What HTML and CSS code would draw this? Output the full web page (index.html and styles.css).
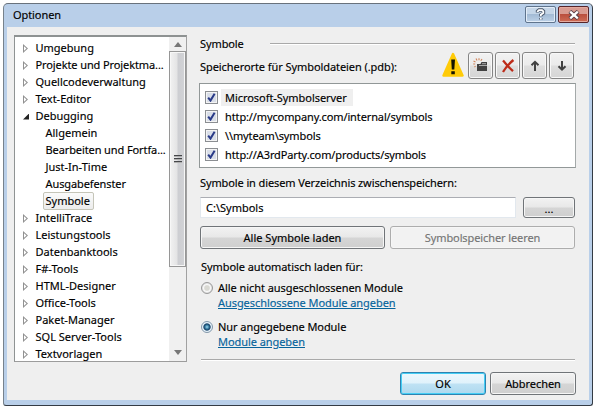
FILE: index.html
```html
<!DOCTYPE html>
<html lang="de">
<head>
<meta charset="utf-8">
<title>Optionen</title>
<link rel="stylesheet" href="styles.css">
</head>
<body>
<div class="window">
  <header class="titlebar">
    <h1>Optionen</h1>
    <div class="caption-buttons">
      <button class="caption help" aria-label="Hilfe"><svg width="11" height="13" viewBox="0 0 11 13"><path d="M2.5 4.5V3.2L4 2h3l1.5 1.3v1.9L5.8 7v1.5M5.8 10v1.5" fill="none" stroke="#4c586b" stroke-width="3.4"/><path d="M2.7 4V3.4L4 2.2h3l1.3 1.2v1.7L5.8 6.8v1.5M5.8 10.1v1.3" fill="none" stroke="#fff" stroke-width="1.8"/></svg></button>
      <button class="caption close" aria-label="Schließen"><svg width="12" height="10" viewBox="0 0 12 10"><path d="M1.8 1.4l8.4 7.2M10.2 1.4L1.8 8.6" stroke="#594048" stroke-width="4.2"/><path d="M2.2 1.7l7.6 6.6M9.8 1.7L2.2 8.3" stroke="#fff" stroke-width="2.3"/></svg></button>
    </div>
  </header>
  <main class="client">
    <nav class="tree">
      <ul class="nodes">
        <li><i class="closed"></i><span>Umgebung</span></li>
        <li><i class="closed"></i><span class="tight">Projekte und Projektma...</span></li>
        <li><i class="closed"></i><span>Quellcodeverwaltung</span></li>
        <li><i class="closed"></i><span>Text-Editor</span></li>
        <li><i class="open"></i><span>Debugging</span></li>
        <li class="child"><span>Allgemein</span></li>
        <li class="child"><span class="tight">Bearbeiten und Fortfa...</span></li>
        <li class="child"><span>Just-In-Time</span></li>
        <li class="child"><span class="tight">Ausgabefenster</span></li>
        <li class="child"><span class="selected">Symbole</span></li>
        <li><i class="closed"></i><span>IntelliTrace</span></li>
        <li><i class="closed"></i><span>Leistungstools</span></li>
        <li><i class="closed"></i><span>Datenbanktools</span></li>
        <li><i class="closed"></i><span>F#-Tools</span></li>
        <li><i class="closed"></i><span>HTML-Designer</span></li>
        <li><i class="closed"></i><span>Office-Tools</span></li>
        <li><i class="closed"></i><span>Paket-Manager</span></li>
        <li><i class="closed"></i><span>SQL Server-Tools</span></li>
        <li><i class="closed"></i><span>Textvorlagen</span></li>
      </ul>
      <div class="scrollbar">
        <svg class="arrow" width="8" height="5"><path d="M0 5L4 0l4 5z"/></svg>
        <div class="thumb"><b></b><b></b><b></b></div>
        <svg class="arrow down" width="8" height="5"><path d="M0 0h8L4 5z"/></svg>
      </div>
    </nav>
    <section class="page">
      <div class="heading"><span>Symbole</span><hr></div>
      <div class="toolbar">
        <span class="caption-text">Speicherorte für Symboldateien (.pdb):</span>
        <svg class="warning" width="22" height="26" viewBox="0 0 22 26"><path d="M11 2L20.5 23.5h-19z" fill="#ffcb08" stroke="#ffcb08" stroke-width="2.4" stroke-linejoin="round"/><path d="M9.2 7.5h3.8l-.7 10H9.8zM9.3 19.3h3.5v3H9.3z" fill="#161400"/></svg>
        <button class="tool"><svg width="16" height="16" viewBox="0 0 16 16"><path d="M4 13V6h3.500l1-2H14v9z" fill="#414141"/><path d="M6 7.500h8M9 5.700h4" stroke="#b5b5b5" stroke-width=".9"/><path d="M.5 3l2 1M3 .5l1 2M6 .2v2M9 1L7.800 2.800M.2 6h2M2.500 8l-1 1.200" stroke="#d18358" stroke-width="1.1"/></svg></button>
        <button class="tool"><svg width="16" height="16" viewBox="0 0 16 16"><path d="M3 2.500c3 3.300 6 7 10 10.700M13.400 2C9 5.700 5.700 9.300 3 14" stroke="#bd2c1a" stroke-width="2.300" fill="none"/></svg></button>
        <button class="tool"><svg width="16" height="16" viewBox="0 0 16 16"><path d="M8 13V4M4.500 7.300L8 3.800l3.500 3.500" stroke="#414141" stroke-width="2" fill="none"/></svg></button>
        <button class="tool"><svg width="16" height="16" viewBox="0 0 16 16"><path d="M8 3v9M4.500 8.200L8 11.700l3.500-3.500" stroke="#414141" stroke-width="2" fill="none"/></svg></button>
      </div>
      <ul class="locations">
        <li><i class="check"><svg width="9" height="9" viewBox="0 0 9 9"><path d="M1.2 4.6l2.3 3L7.6.8" fill="none" stroke="#293a87" stroke-width="2"/></svg></i><span class="current">Microsoft-Symbolserver</span></li>
        <li><i class="check"><svg width="9" height="9" viewBox="0 0 9 9"><path d="M1.2 4.6l2.3 3L7.6.8" fill="none" stroke="#293a87" stroke-width="2"/></svg></i><span class="url">http://mycompany.com/internal/symbols</span></li>
        <li><i class="check"><svg width="9" height="9" viewBox="0 0 9 9"><path d="M1.2 4.6l2.3 3L7.6.8" fill="none" stroke="#293a87" stroke-width="2"/></svg></i><span class="url">\\myteam\symbols</span></li>
        <li><i class="check"><svg width="9" height="9" viewBox="0 0 9 9"><path d="M1.2 4.6l2.3 3L7.6.8" fill="none" stroke="#293a87" stroke-width="2"/></svg></i><span class="url">http://A3rdParty.com/products/symbols</span></li>
      </ul>
      <div class="cache-label">Symbole in diesem Verzeichnis zwischenspeichern:</div>
      <div class="cache-row"><div class="field">C:\Symbols</div><button class="push browse">...</button></div>
      <div class="actions"><button class="push">Alle Symbole laden</button><button class="push disabled">Symbolspeicher leeren</button></div>
      <div class="auto-label">Symbole automatisch laden für:</div>
      <div class="option"><i class="radio"></i><div><p>Alle nicht ausgeschlossenen Module</p><a>Ausgeschlossene Module angeben</a></div></div>
      <div class="option"><i class="radio on"></i><div><p>Nur angegebene Module</p><a>Module angeben</a></div></div>
      <hr class="rule">
      <footer><button class="push default">OK</button><button class="push">Abbrechen</button></footer>
    </section>
  </main>
</div>
</body>
</html>
```
FILE: styles.css
```css
* { box-sizing: border-box; }
body { margin: 0; width: 594px; height: 407px; padding: 3px 1px 1px 3px; background: #fff; overflow: hidden; font: 11px/17px "Noto Sans", "Open Sans", sans-serif; color: #000; -webkit-text-stroke: 0.15px currentColor; }
h1, p, ul { margin: 0; padding: 0; font: inherit; list-style: none; }
button { font: inherit; color: inherit; padding: 0; margin: 0; display: flex; align-items: center; justify-content: center; flex: none; }
hr { border: 0; margin: 0; height: 2px; background: #a9a9a9; border-bottom: 1px solid #fff; }
svg { display: block; }
.window { width: 590px; height: 403px; border: 1px solid #343b44; border-top-color: #69727c; border-left-color: #77828c; border-radius: 5px 5px 3px 3px; background: #b9cfe9; padding: 0 3px 4px; }
.titlebar { height: 23px; display: flex; justify-content: space-between; padding-left: 6px; }
.titlebar h1 { line-height: 22px; letter-spacing: -0.08px; }
.caption-buttons { display: flex; gap: 2px; padding-top: 2px; }
.caption { width: 31px; height: 17px; border: 1px solid #5f748d; border-radius: 2px; box-shadow: inset 0 0 0 1px #e3edf8; background: linear-gradient(#c5d6e8 45%, #a3bbd5 50%, #bdd1e7); }
.caption.close { border-color: #57252a; box-shadow: inset 0 0 0 1px #e5aa9e; background: linear-gradient(#d99b91 45%, #ba4f3e 50%, #cf6c55); }
.client { height: 373px; background: #efefef; display: flex; padding: 8px 13px 0 7px; gap: 12px; }
.tree { width: 173px; height: 327px; border: 1px solid #9b9b9b; border-top-width: 2px; border-color: #8e9292 #a1a1a1 #9c9c9c #8f9393; background: #fff; display: flex; justify-content: space-between; flex: none; }
.nodes { padding-top: 2px; }
.nodes li { height: 17px; display: flex; align-items: center; padding-left: 8px; white-space: nowrap; }
.nodes i { width: 12.5px; flex: none; display: block; padding-top: 2px; }
.nodes i::before { content: ""; display: block; }
.closed::before { width: 5px; height: 9px; background: #929292; clip-path: polygon(0 0, 5px 4.5px, 0 9px, 0 0, 1px 2.2px, 1px 6.8px, 3.5px 4.5px, 1px 2.2px); }
.open::before { width: 6px; height: 6px; background: #222; clip-path: polygon(100% 0, 100% 100%, 0 100%); }
.nodes .child { padding-left: 30.5px; }
.tight { letter-spacing: -0.1px; }
.selected { height: 18px; line-height: 16px; border: 1px solid #c5c5b8; border-radius: 2px; padding: 0 3px 0 2px; margin-left: -3px; background: linear-gradient(#fafafa, #ececec); }
.scrollbar { width: 17px; background: #f0f0f0; display: flex; flex-direction: column; align-items: center; padding: 5px 0 6px; justify-content: space-between; }
.arrow { fill: #777; }
.thumb { width: 17px; height: 216px; margin: 4px 0 auto; border: 1px solid #969696; box-shadow: inset 0 0 0 1px #f7f7f7; background: linear-gradient(90deg, #f2f2f2, #e4e4e5 45%, #cdced2 55%, #d2d3d6); display: flex; flex-direction: column; align-items: center; justify-content: center; gap: 1px; }
.thumb b { width: 8px; height: 2px; background: #45474a; border-bottom: 1px solid #b0b0b0; }
.page { width: 377px; flex: none; }
.heading { height: 17px; display: flex; align-items: center; justify-content: space-between; padding: 0 1px; letter-spacing: -0.1px; }
.heading hr { width: 305px; }
.toolbar { height: 28px; display: flex; gap: 2px; padding-right: 2px; }
.caption-text { flex: 1; line-height: 30px; padding-left: 1px; white-space: nowrap; letter-spacing: -0.07px; }
.warning { margin-right: 2px; flex: none; }
.tool { width: 25px; height: 27px; border: 1px solid #858585; border-radius: 3px; background: linear-gradient(#f2f2f2, #ebebeb 48%, #dedede 52%, #d5d5d5); box-shadow: inset 0 0 0 1px #f8f8f8; }
.locations { margin-top: 3px; height: 85px; border: 1px solid #999; border-color: #919797 #a4a9a9 #929898 #919797; background: #fff; padding: 4px 5px; }
.locations li { height: 19px; display: flex; align-items: center; gap: 6px; }
.locations span { padding-left: 1px; }
.url { letter-spacing: -0.12px; }
.check { width: 13px; height: 13px; border: 1px solid #8b8e92; background: #d9dee8; box-shadow: inset 0 0 0 1px #f4f4f4; padding: 1px; flex: none; }
.locations .current { width: 132px; height: 17px; background: #efefef; margin-left: -3px; padding-left: 4px; letter-spacing: -0.05px; }
.cache-label { height: 29px; line-height: 30px; padding-left: 1px; white-space: nowrap; letter-spacing: -0.11px; }
.cache-row { display: flex; justify-content: space-between; padding: 0 1px; }
.field { width: 316px; height: 21px; border: 1px solid #e2e8ee; border-top-color: #abadb3; background: #fff; line-height: 19px; padding-left: 5px; }
.push { width: 86px; height: 23px; border: 1px solid #707478; border-radius: 3px; background: linear-gradient(#f2f2f2, #e8e8e8 48%, #d5d5d5 52%, #cfcfcf); box-shadow: inset 0 0 0 1px #f6f6f6; }
.browse { width: 52px; height: 21px; padding-top: 2px; }
.actions { display: flex; justify-content: space-between; padding: 8px 1px 0; }
.actions .push { width: 185px; height: 23px; }
.actions .disabled { color: #757575; border-color: #adadad; background: #f2f2f2; letter-spacing: -0.1px; }
.auto-label { padding-left: 2px; height: 31px; line-height: 36px; letter-spacing: -0.07px; }
.option { display: flex; gap: 5px; height: 39px; padding-left: 2px; line-height: 16px; letter-spacing: -0.06px; }
.option p { height: 15px; }
.option a { display: block; color: #06649c; text-decoration: underline; }
.radio { width: 12px; height: 12px; margin-top: 2px; border: 1px solid #9a9a9a; border-radius: 50%; background: radial-gradient(#d9d9d3 32%, #f8f8f8 50%, #dedede 70%); }
.radio.on { border-color: #8297aa; background: radial-gradient(circle at 5px 5px, #9edbf2 0, #31749a 2px, #153e63 3.2px, #e6f2fa 4.1px); }
.rule { margin: 1px 1px 0 2px; }
footer { display: flex; justify-content: flex-end; gap: 4px; margin-top: 11px; }
footer .push { letter-spacing: -0.05px; }
.default { border-color: #2e83b0; box-shadow: inset 0 0 0 1px #44cef5; background: linear-gradient(#edf7fc, #e0f2fb 48%, #bfe2f4 52%, #aed9ee); }
```
